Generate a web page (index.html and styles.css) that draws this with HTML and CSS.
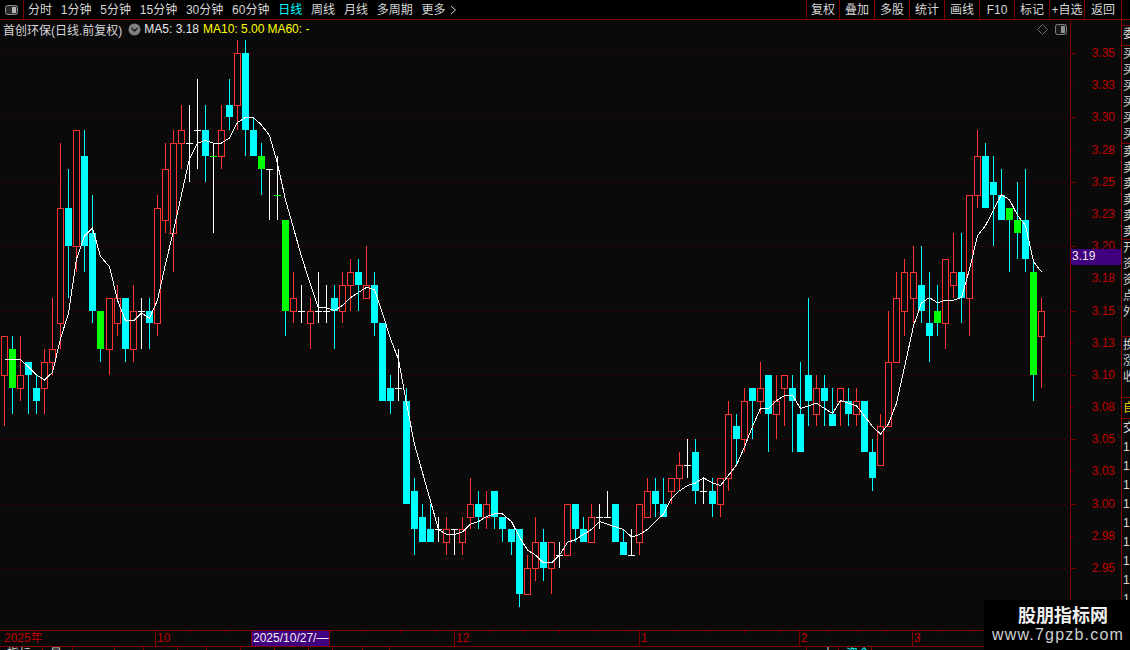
FILE: index.html
```html
<!DOCTYPE html>
<html lang="zh-CN">
<head>
    <meta charset="UTF-8">
    <meta name="viewport" content="width=device-width, initial-scale=1.0">
    <title>首创环保 - 日线</title>
    <link rel="stylesheet" href="styles.css">
</head>
<body>
    <div class="toolbar">
        <div class="panel-toggle">
            <svg width="13" height="10" viewBox="0 0 13 10">
                <rect x="0.5" y="0.5" width="12" height="9" rx="2" fill="#2a2a2a" stroke="#909090"/>
                <rect x="7" y="2" width="4" height="6" fill="#b4b4b4"/>
            </svg>
        </div>
        <nav class="periods">
            <span>分时</span>
            <span>1分钟</span>
            <span>5分钟</span>
            <span>15分钟</span>
            <span>30分钟</span>
            <span>60分钟</span>
            <span class="active">日线</span>
            <span>周线</span>
            <span>月线</span>
            <span>多周期</span>
            <span class="more">更多
                <svg width="7" height="10" viewBox="0 0 7 10">
                    <path d="M1 1l4.5 4L1 9" fill="none" stroke="#d8d8d8"/>
                </svg>
            </span>
        </nav>
        <div class="tools">
            <span>复权</span>
            <span>叠加</span>
            <span>多股</span>
            <span>统计</span>
            <span>画线</span>
            <span>F10</span>
            <span>标记</span>
            <span>+自选</span>
            <span>返回</span>
        </div>
    </div>

    <div class="main">
        <div class="plot">
            <div class="legend">
                <span class="stock-name">首创环保(日线.前复权)</span>
                <svg class="legend-toggle" width="13" height="13" viewBox="0 0 13 13">
                    <circle cx="6.5" cy="6.5" r="6" fill="#808080"/>
                    <path d="M3.5 5l3 3 3-3" fill="none" stroke="#1c1c1c" stroke-width="1.4"/>
                </svg>
                <span class="ma-white">MA5: 3.18</span>
                <span class="ma-yellow">MA10: 5.00</span>
                <span class="ma-yellow">MA60: -</span>
                <span class="legend-icons">
                    <svg width="11" height="11" viewBox="0 0 11 11">
                        <path d="M5.5 0.5l5 5-5 5-5-5z" fill="none" stroke="#707070"/>
                    </svg>
                    <svg width="12" height="11" viewBox="0 0 12 11">
                        <rect x="0.5" y="0.5" width="11" height="10" rx="2" fill="#1a1a1a" stroke="#808080"/>
                        <rect x="6" y="2" width="4" height="7" fill="#909090"/>
                    </svg>
                </span>
            </div>
            <svg id="chart" class="chart" width="1070" height="592" viewBox="0 38 1070 592"></svg>
        </div>

        <div class="price-axis">
            <div class="tick major">3.35</div>
            <div class="tick">3.33</div>
            <div class="tick major">3.30</div>
            <div class="tick">3.28</div>
            <div class="tick major">3.25</div>
            <div class="tick">3.23</div>
            <div class="tick major">3.20</div>
            <div class="tick">3.18</div>
            <div class="tick major">3.15</div>
            <div class="tick">3.13</div>
            <div class="tick major">3.10</div>
            <div class="tick">3.08</div>
            <div class="tick major">3.05</div>
            <div class="tick">3.03</div>
            <div class="tick major">3.00</div>
            <div class="tick">2.98</div>
            <div class="tick major">2.95</div>
            <div class="price-flag">3.19</div>
        </div>

        <div class="side-panel">
            <div class="side-group g-a"><p>委比</p></div>
            <div class="side-group g-b"><p>买一</p><p>买二</p><p>买三</p><p>买四</p><p>买五</p><p>买六</p></div>
            <div class="side-group g-c"><p>卖一</p><p>卖二</p><p>卖三</p><p>卖四</p><p>卖五</p><p>卖六</p></div>
            <div class="side-group g-d"><p>开盘</p><p>资金</p><p>资产</p><p>点差</p><p>外盘</p></div>
            <div class="side-group g-e"><p>换手</p><p>涨跌</p><p>收盘</p></div>
            <div class="side-group g-f"><p class="side-yellow">自选</p></div>
            <div class="side-group g-g"><p>交易</p><p>1</p><p>1</p><p>1</p><p>1</p><p>1</p><p>1</p><p>1</p><p>1</p><p>1</p></div>
        </div>
    </div>

    <div class="date-axis">
        <div class="month first">2025年</div>
        <div class="month">10</div>
        <div class="month">12</div>
        <div class="month">1</div>
        <div class="month narrow">2</div>
        <div class="month narrow">3</div>
        <div class="date-flag">2025/10/27/—</div>
    </div>

    <div class="tabs">
        <span>指标</span>
        <span>量</span>
        <span></span>
        <span></span>
        <span></span>
        <span></span>
        <span></span>
        <span></span>
        <span></span>
        <span></span>
        <span></span>
        <span></span>
        <span></span>
        <span class="tab-center">大</span>
        <span class="tab-active">资金</span>
        <span></span>
    </div>

    <div class="watermark">
        <strong>股朋指标网</strong>
        <span>www.7gpzb.com</span>
    </div>

    <script src="chart.js"></script>
</body>
</html>
```

FILE: styles.css
```css
* {
    margin: 0;
    padding: 0;
    box-sizing: border-box;
}

html, body {
    width: 1130px;
    height: 650px;
    overflow: hidden;
}

body {
    position: relative;
    background: #0a0a0a;
    color: #d8d8d8;
    font-family: "Liberation Sans", "Noto Sans CJK SC", sans-serif;
    font-size: 12px;
}

/* top bar */
.toolbar {
    display: flex;
    height: 20px;
    border-bottom: 1px solid #800000;
    background: #000;
    line-height: 20px;
}

.panel-toggle {
    width: 24px;
    border-right: 1px solid #800000;
    padding: 5px 0 0 5px;
}

.panel-toggle svg {
    display: block;
}

.periods {
    display: flex;
    gap: 8.8px;
    padding-left: 4px;
}

.periods .active {
    color: #00ffff;
}

.more svg {
    margin-left: 1px;
    vertical-align: -1px;
}

.tools {
    display: flex;
    margin-left: auto;
    margin-right: 8px;
}

.tools span {
    width: 35px;
    text-align: center;
    border-left: 1px solid #800000;
}

.tools span:first-child {
    width: 33px;
}

.tools span:last-child {
    width: 38px;
    border-right: 1px solid #800000;
}

/* chart + right columns */
.main {
    display: flex;
    height: 610px;
}

.plot {
    width: 1070px;
}

.legend {
    display: flex;
    align-items: center;
    height: 18px;
    padding-left: 3px;
    gap: 3px;
}

.legend-toggle {
    margin: 0 0 0 3px;
}

.ma-white {
    margin-right: 1px;
    color: #e8e8e8;
}

.ma-yellow {
    color: #ffff00;
}

.legend-icons {
    display: flex;
    align-items: center;
    gap: 7px;
    margin-left: auto;
    margin-right: 3px;
}

.legend-icons svg {
    display: block;
}

.chart {
    display: block;
}

.price-axis {
    position: relative;
    width: 52px;
    padding-top: 17px;
    border-left: 1px solid #800000;
    border-right: 1px solid #800000;
}

.tick {
    position: relative;
    height: 32.2px;
    line-height: 32.2px;
    padding-right: 6px;
    text-align: right;
    color: #c00000;
}

.tick::before {
    content: "";
    position: absolute;
    left: 0;
    top: 16px;
    width: 2px;
    height: 1px;
    background: #800000;
}

.tick.major::before {
    width: 5px;
}

.price-flag {
    position: absolute;
    left: 0;
    right: 0;
    top: 229px;
    height: 16px;
    line-height: 15px;
    padding-left: 1px;
    background: #400080;
    color: #e8e8e8;
}

.side-panel {
    width: 8px;
    overflow: hidden;
    white-space: nowrap;
    color: #d8d8d8;
    padding-top: 5px;
}

.side-group {
    border-top: 1px solid #800000;
    padding-left: 1px;
    line-height: 16px;
    overflow: hidden;
}

.g-a { height: 20px; }
.g-b { height: 98px; }
.g-c { height: 96px; }
.g-d { height: 97px; }
.g-e { height: 61px; }
.g-f { height: 21px; line-height: 20px; }
.g-g { height: 212px; line-height: 19px; }

.side-yellow {
    color: #e0d000;
}

/* dates */
.date-axis {
    position: relative;
    display: grid;
    grid-template-columns: 155px 299px 185px 160px 113px 1fr;
    width: 1071px;
    height: 17px;
    border-top: 1px solid #800000;
    border-bottom: 1px solid #800000;
    border-right: 1px solid #800000;
    line-height: 15px;
    color: #c00000;
}

.month {
    padding-left: 1px;
    border-left: 1px solid #800000;
    background: repeating-linear-gradient(90deg, transparent 0 34px, #800000 34px 35px) no-repeat;
    background-size: 100% 2px;
}

.month.first {
    padding-left: 4px;
    border-left: 0;
    background: none;
}

.month.narrow {
    background-image: repeating-linear-gradient(90deg, transparent 0 28px, #800000 28px 29px);
}

.date-flag {
    position: absolute;
    left: 251px;
    top: 0;
    width: 79px;
    height: 15px;
    padding-left: 1px;
    background: #400080;
    color: #f0f0f0;
    white-space: nowrap;
    border-left: 1px solid #800000;
    border-right: 1px solid #800000;
}

/* clipped tab bar under the dates */
.tabs {
    display: grid;
    grid-template-columns: 43px 30px 42px 29px 34px 29px 34px 34px 34px 24px 30px 27px 417px 32px 33px 1fr;
    height: 3px;
    overflow: hidden;
    line-height: 12px;
    white-space: nowrap;
}

.tabs span {
    padding: 1px 0 0 7px;
    border-right: 1px solid #800000;
    overflow: hidden;
}

.tabs .tab-center {
    padding-left: 15px;
}

.tabs .tab-active {
    color: #00ffff;
}

/* site mark, sits over the corner */
.watermark {
    position: absolute;
    right: 0;
    bottom: 0;
    width: 146px;
    height: 50px;
    background: #000;
    text-align: center;
    color: #e4e4e4;
}

.watermark strong {
    display: block;
    margin-top: 3px;
    padding-left: 12px;
    font-size: 18px;
    line-height: 22px;
    color: #f0f0f0;
    font-family: "Noto Sans CJK SC", sans-serif;
}

.watermark span {
    display: block;
    padding-left: 2px;
    font-size: 16px;
    line-height: 20px;
    letter-spacing: 1.2px;
    color: #d0d0d0;
}
```

FILE: chart.js
```js
// r = hollow red, c = cyan, g = green, w = white doji, n = green tick on white wick
// [type, top, bottom, high, low] in cents
const candles = [
    ['r',313,310,313,306], ['g',312,309,313,307], ['r',310,309,313,308], ['c',311,310,311,307],
    ['c',309,308,310,307], ['r',311,309,312,307], ['r',312,311,316,310], ['r',323,314,328,312],
    ['c',323,320,326,316], ['r',329,320,329,318], ['c',327,320,329,318], ['c',321,315,324,314],
    ['g',315,312,315,311], ['r',316,312,316,310], ['r',316,314,317,313], ['c',316,312,316,311],
    ['r',315,312,317,311], ['w',315,315,316,312], ['c',315,314,316,312], ['r',323,314,324,313],
    ['r',326,322,328,321], ['r',328,321,329,318], ['r',329,328,331,326], ['w',328,328,331,325],
    ['w',329,329,333,326], ['c',329,327,331,325], ['n',327,327,328,321], ['r',329,327,331,326],
    ['c',331,330,333,329], ['r',335,331,336,329], ['c',335,329,336,327], ['c',329,327,330,327],
    ['g',327,326,328,324], ['w',326,326,326,322], ['n',324,324,327,322], ['g',322,315,322,313],
    ['r',316,315,318,314], ['w',315,315,317,314], ['r',315,314,316,312], ['w',315,315,318,314],
    ['w',315,315,317,314], ['c',316,315,317,312], ['r',317,315,318,314], ['r',318,317,319,315],
    ['c',318,317,319,315], ['r',317,316,320,316], ['c',317,314,318,313], ['c',314,308,314,308],
    ['c',309,308,310,307], ['w',309,309,312,308], ['c',308,300,309,300], ['c',301,298,302,296],
    ['c',299,297,300,297], ['c',298,297,300,297], ['w',298,298,299,297], ['r',298,297,299,296],
    ['w',298,298,298,296], ['r',298,297,299,296], ['r',300,299,302,298], ['c',300,299,301,298],
    ['r',300,299,301,298], ['c',301,299,301,298], ['c',299,298,299,297], ['c',298,297,298,296],
    ['c',298,293,298,292], ['r',295,293,296,293], ['r',297,295,299,294], ['c',297,295,298,294],
    ['r',297,295,297,293], ['w',296,296,297,295], ['r',300,296,300,296], ['c',300,298,300,297],
    ['c',298,297,299,297], ['r',299,297,300,297], ['w',299,299,300,298], ['w',299,299,301,299],
    ['c',300,297,300,297], ['c',297,296,298,296], ['w',296,296,298,296], ['r',300,297,300,296],
    ['r',301,299,302,299], ['c',301,300,302,299], ['c',300,299,302,299], ['r',302,301,302,300],
    ['r',303,302,304,301], ['w',303,303,305,302], ['c',304,301,305,300], ['w',301,301,302,300],
    ['c',301,300,302,299], ['r',302,300,302,299], ['r',307,302,308,301], ['c',306,305,307,303],
    ['r',308,305,309,304], ['c',309,308,309,305], ['r',309,308,311,307], ['c',310,307,310,304],
    ['r',308,307,310,305], ['r',310,309,310,306], ['c',309,308,310,304], ['c',307,304,311,304],
    ['c',310,308,316,306], ['r',309,307,310,306], ['c',309,308,310,306], ['c',307,306,309,306],
    ['r',309,308,309,306], ['c',308,307,309,306], ['r',308,307,309,306], ['c',308,304,308,304],
    ['c',304,302,305,301], ['r',306,303,307,303], ['r',311,306,315,306], ['r',316,311,318,311],
    ['r',318,315,319,313], ['r',318,316,320,314], ['c',317,315,320,314], ['c',314,313,318,311],
    ['g',315,314,317,313], ['r',319,314,319,312], ['r',318,317,321,316], ['c',318,316,321,314],
    ['r',324,316,324,313], ['r',327,324,329,323], ['c',327,323,328,323], ['c',325,324,327,320],
    ['c',324,322,326,322], ['g',323,322,323,318], ['g',322,321,325,319], ['c',322,319,326,318],
    ['g',318,310,319,308], ['r',315,313,316,309]
];

const colors = { r: '#ff3232', c: '#00ffff', g: '#00ff00', w: '#ffffff', n: '#00ff00' };
const wickColors = { r: '#ff3232', c: '#00ffff', g: '#00ffff', w: '#ffffff', n: '#ffffff' };

const priceY = cents => Math.round(53 + (335 - cents) * 12.875);
const leftX = i => Math.round(1 + i * 8.04);

// closes for the moving average; the first days and the last point are taken from the picture
const fixedMa = { 0: 311.2, 1: 311.2, 2: 311.2, 3: 310.6, 129: 318 };
const closes = candles.map(([type, top, bottom]) => (type === 'c' || type === 'g') ? bottom : top);

function ma5(i) {
    if (fixedMa[i] !== undefined) return fixedMa[i];
    return closes.slice(i - 4, i + 1).reduce((a, b) => a + b, 0) / 5;
}

function gridLines() {
    let out = '';
    for (let cents = 335; cents >= 295; cents -= 5) {
        const y = priceY(cents) + 0.5;
        out += `<line x1="0" y1="${y}" x2="1067" y2="${y}" stroke="#560000" stroke-dasharray="1 3"/>`;
    }
    return out;
}

function candle([type, top, bottom, high, low], i) {
    const x = leftX(i);
    const mid = x + 3.5;
    const yTop = priceY(top);
    const yBottom = priceY(bottom);
    const wick = wickColors[type];
    const body = colors[type];
    let out = '';

    if (high > top) out += `<line x1="${mid}" y1="${priceY(high)}" x2="${mid}" y2="${yTop}" stroke="${wick}"/>`;
    if (low < bottom) out += `<line x1="${mid}" y1="${yBottom}" x2="${mid}" y2="${priceY(low)}" stroke="${wick}"/>`;

    if (type === 'w' || type === 'n') {
        out += `<rect x="${x}" y="${yTop}" width="7" height="1" fill="${body}"/>`;
    } else if (type === 'r') {
        out += `<rect x="${x + 0.5}" y="${yTop + 0.5}" width="6" height="${yBottom - yTop}" fill="#0a0a0a" stroke="${body}"/>`;
    } else {
        out += `<rect x="${x}" y="${yTop}" width="7" height="${yBottom - yTop}" fill="${body}"/>`;
    }
    return out;
}

function maLine() {
    const points = candles.map((c, i) => {
        const y = 53 + (335 - ma5(i)) * 12.875;
        return `${leftX(i) + 3.5},${y.toFixed(1)}`;
    });
    return `<polyline points="${points.join(' ')}" fill="none" stroke="#ffffff"/>`;
}

// grid stays out of the crisp group so the dots land on whole pixels
document.getElementById('chart').innerHTML =
    `${gridLines()}<g shape-rendering="crispEdges">${candles.map(candle).join('')}${maLine()}</g>`;
```
